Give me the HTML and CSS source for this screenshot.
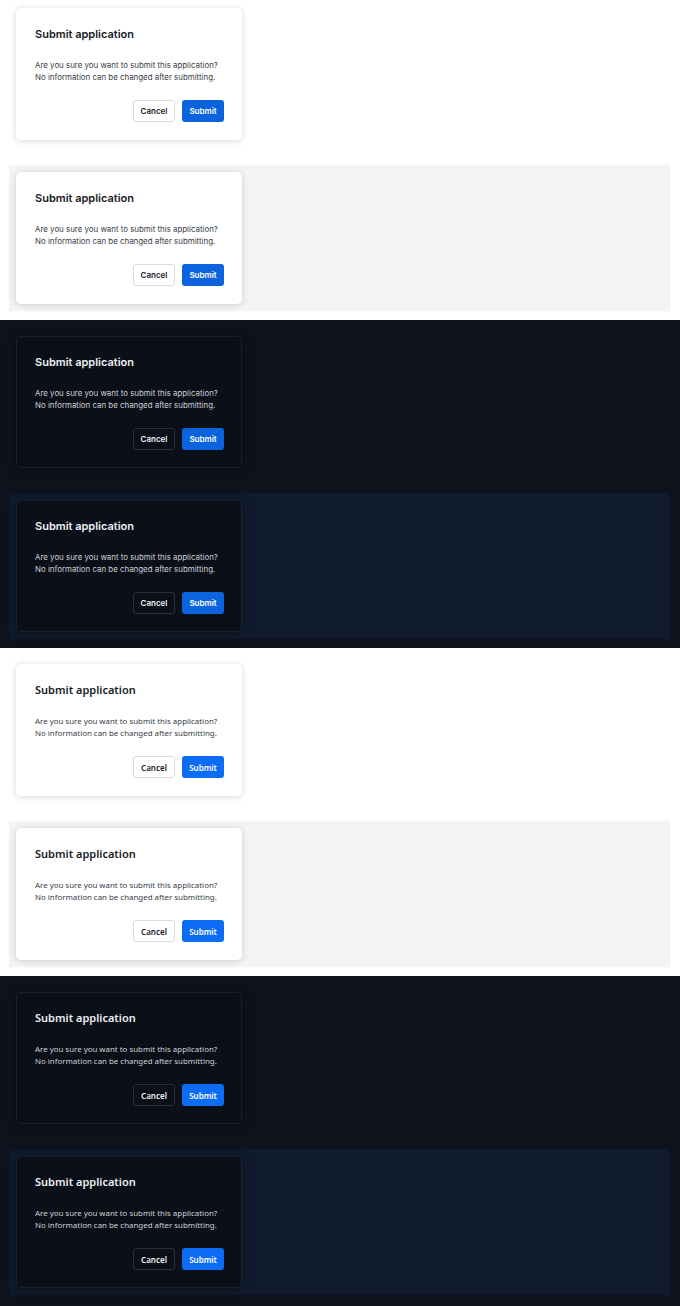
FILE: index.html
```html
<!DOCTYPE html>
<html lang="en">
<head>
    <meta charset="UTF-8">
    <meta name="viewport" content="width=device-width, initial-scale=1.0">
    <title>Submit application dialog</title>
    <link rel="stylesheet" href="styles.css">
</head>
<body>
    <div class="page">
        <!-- Inter, light -->
        <div class="theme theme-light font-inter">
            <section class="frame">
                <div class="stage">
                    <div class="dialog">
                        <h2 class="dialog-title">Submit application</h2>
                        <p class="dialog-text">Are you sure you want to submit this application?<br>No information can be changed after submitting.</p>
                        <div class="dialog-actions">
                            <button class="btn btn-cancel">Cancel</button>
                            <button class="btn btn-submit">Submit</button>
                        </div>
                    </div>
                </div>
            </section>
            <section class="frame">
                <div class="stage stage-fill">
                    <div class="dialog">
                        <h2 class="dialog-title">Submit application</h2>
                        <p class="dialog-text">Are you sure you want to submit this application?<br>No information can be changed after submitting.</p>
                        <div class="dialog-actions">
                            <button class="btn btn-cancel">Cancel</button>
                            <button class="btn btn-submit">Submit</button>
                        </div>
                    </div>
                </div>
            </section>
        </div>

        <!-- Inter, dark -->
        <div class="theme theme-dark font-inter">
            <section class="frame">
                <div class="stage">
                    <div class="dialog">
                        <h2 class="dialog-title">Submit application</h2>
                        <p class="dialog-text">Are you sure you want to submit this application?<br>No information can be changed after submitting.</p>
                        <div class="dialog-actions">
                            <button class="btn btn-cancel">Cancel</button>
                            <button class="btn btn-submit">Submit</button>
                        </div>
                    </div>
                </div>
            </section>
            <section class="frame">
                <div class="stage stage-fill">
                    <div class="dialog">
                        <h2 class="dialog-title">Submit application</h2>
                        <p class="dialog-text">Are you sure you want to submit this application?<br>No information can be changed after submitting.</p>
                        <div class="dialog-actions">
                            <button class="btn btn-cancel">Cancel</button>
                            <button class="btn btn-submit">Submit</button>
                        </div>
                    </div>
                </div>
            </section>
        </div>

        <!-- Noto, light -->
        <div class="theme theme-light font-noto">
            <section class="frame">
                <div class="stage">
                    <div class="dialog">
                        <h2 class="dialog-title">Submit application</h2>
                        <p class="dialog-text">Are you sure you want to submit this application?<br>No information can be changed after submitting.</p>
                        <div class="dialog-actions">
                            <button class="btn btn-cancel">Cancel</button>
                            <button class="btn btn-submit">Submit</button>
                        </div>
                    </div>
                </div>
            </section>
            <section class="frame">
                <div class="stage stage-fill">
                    <div class="dialog">
                        <h2 class="dialog-title">Submit application</h2>
                        <p class="dialog-text">Are you sure you want to submit this application?<br>No information can be changed after submitting.</p>
                        <div class="dialog-actions">
                            <button class="btn btn-cancel">Cancel</button>
                            <button class="btn btn-submit">Submit</button>
                        </div>
                    </div>
                </div>
            </section>
        </div>

        <!-- Noto, dark -->
        <div class="theme theme-dark font-noto">
            <section class="frame">
                <div class="stage">
                    <div class="dialog">
                        <h2 class="dialog-title">Submit application</h2>
                        <p class="dialog-text">Are you sure you want to submit this application?<br>No information can be changed after submitting.</p>
                        <div class="dialog-actions">
                            <button class="btn btn-cancel">Cancel</button>
                            <button class="btn btn-submit">Submit</button>
                        </div>
                    </div>
                </div>
            </section>
            <section class="frame">
                <div class="stage stage-fill">
                    <div class="dialog">
                        <h2 class="dialog-title">Submit application</h2>
                        <p class="dialog-text">Are you sure you want to submit this application?<br>No information can be changed after submitting.</p>
                        <div class="dialog-actions">
                            <button class="btn btn-cancel">Cancel</button>
                            <button class="btn btn-submit">Submit</button>
                        </div>
                    </div>
                </div>
            </section>
        </div>
    </div>
</body>
</html>
```

FILE: styles.css
```css
* {
    box-sizing: border-box;
    margin: 0;
    padding: 0;
}

body {
    background-color: #0d121c;
    overflow: hidden;
}

.page {
    margin-top: -8px;
}

.font-inter {
    font-family: Inter, 'Liberation Sans', sans-serif;
}

.font-noto {
    font-family: 'Noto Sans', 'Open Sans', sans-serif;
}

.frame {
    padding: 9px 10px 9px 9px;
}

.stage {
    padding: 7px;
}

.dialog {
    width: 226px;
    height: 132px;
    padding: 19px 18px 17px 19px;
    border-radius: 5px;
}

.dialog-title {
    font-size: 11px;
    font-weight: 600;
    line-height: 14px;
    margin-bottom: 19px;
}

.dialog-text {
    font-size: 7.9px;
    line-height: 11.5px;
    margin-bottom: 17px;
}

.dialog-actions {
    display: flex;
    justify-content: flex-end;
    gap: 7px;
}

.btn {
    font-family: inherit;
    font-size: 8px;
    font-weight: 600;
    height: 22px;
    width: 42px;
    border-radius: 3px;
    cursor: pointer;
}

.btn-submit {
    border: none;
    color: #ffffff;
}

/* light theme */
.theme-light {
    background-color: #ffffff;
}

.theme-light .stage-fill {
    background-color: #f3f4f6;
    box-shadow: 0 0 2px rgba(0, 0, 0, 0.04);
}

.theme-light .dialog {
    background-color: #ffffff;
    box-shadow: 0 1px 7px rgba(0, 0, 0, 0.16);
}

.theme-light .dialog-title {
    color: #161b26;
}

.theme-light .dialog-text {
    color: #363c48;
}

.theme-light .btn-cancel {
    background-color: #ffffff;
    border: 1px solid #d8dbe0;
    color: #1c212b;
}

/* dark theme */
.theme-dark {
    background-color: #0d121c;
}

.theme-dark .stage-fill {
    background-color: #0f1b2c;
}

.theme-dark .dialog {
    padding: 18px 17px 16px 18px;
    background-color: #0b0f17;
    border: 1px solid #1b212c;
    box-shadow: 0 1px 8px rgba(0, 0, 0, 0.35);
}

.theme-dark .dialog-title {
    color: #eef0f4;
}

.theme-dark .dialog-text {
    color: #cdd1d8;
}

.theme-dark .btn-cancel {
    background-color: #0b0f17;
    border: 1px solid #2a303b;
    color: #eef0f4;
}

.font-inter .btn-submit {
    background-color: #0b64dd;
}

.font-noto .btn-submit {
    background-color: #0c6cf4;
}
```
